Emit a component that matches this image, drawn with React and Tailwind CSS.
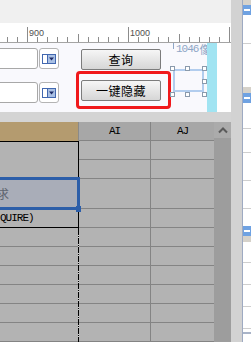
import React from "react";

const cjk = "font-['Noto_Sans_CJK_SC','Noto_Sans',sans-serif]";
const mono = "font-['Liberation_Mono',monospace]";

const Ruler = () => {
  const ticks = [];
  for (let k = -3; k <= 20; k++) {
    const v = 900 + k * 10;
    const x = Math.round(27 + k * 10.1) + 0.5;
    const h = v % 100 === 0 ? 15 : v % 50 === 0 ? 8 : 5;
    ticks.push(
      <line key={k} x1={x} x2={x} y1={19 - h} y2={19} stroke="#8c8c8c" strokeWidth="1" />
    );
  }
  return (
    <div className="h-[20px] bg-white border-b border-[#a4a4a4]">
      <svg width="231" height="19" className="block">
        {ticks}
        <text x="29" y="13" fontSize="9" fill="#505050" fontFamily="Liberation Sans, sans-serif">900</text>
        <text x="130" y="13" fontSize="9" fill="#505050" fontFamily="Liberation Sans, sans-serif">1000</text>
      </svg>
    </div>
  );
};

const DropIcon = () => (
  <svg width="14" height="10" viewBox="0 0 14 10">
    <rect x="0.5" y="0.5" width="13" height="9" fill="#ffffff" stroke="#4268b0" />
    <rect x="5.5" y="0.5" width="8" height="9" fill="#a9c0e4" stroke="#4268b0" />
    <polygon points="7,3.5 12,3.5 9.5,6.5" fill="#1c2a66" />
  </svg>
);

const InputRow = () => (
  <div className="flex items-center">
    <div className="w-[42px] h-[21px] -ml-[4px] bg-white border border-[#a8a8a8] rounded-[3px]" />
    <div className="w-[20px] h-[21px] ml-[1px] bg-white border border-[#b4b4b4] rounded-[3px] flex items-center justify-center">
      <DropIcon />
    </div>
  </div>
);

const Btn = ({ children, className = "" }) => (
  <div
    className={`w-[80px] h-[21px] flex items-center justify-center border border-[#7c7c7c] rounded-[2px] bg-gradient-to-b from-[#f6f6f6] to-[#d6d6d6] text-[12px] tracking-[0.5px] text-black ${cjk} ${className}`}
  >
    {children}
  </div>
);

const Handle = ({ className }) => (
  <div className={`absolute w-[5px] h-[5px] bg-white border border-[#8a9aac] ${className}`} />
);

const FormArea = () => (
  <div className="h-[69px] flex">
    <div className="w-[207px] bg-[#f9f9fd] flex">
      <div className="flex flex-col gap-[13px] pt-[5px]">
        <InputRow />
        <InputRow />
      </div>
      <div className="ml-[17px] flex flex-col pt-[6px]">
        <Btn className="ml-[5px]">查询</Btn>
        <div className="mt-[1px] w-[95px] h-[38px] border-[3px] border-[#f0191c] rounded-[4px] pl-[2px] pt-[6px]">
          <Btn>一键隐藏</Btn>
        </div>
      </div>
      <div className="relative w-[36px]">
        <div className="absolute left-[2px] top-0 w-[1px] h-[6px] bg-[#8ea6c6]" />
        <div className="overflow-hidden w-[36px]">
          <div className="pl-[5px] h-[12px] leading-[12px] whitespace-nowrap text-[#8ea6c6] text-[10px] flex items-center">
            <span className={`${mono} text-[11px] tracking-[-1px]`}>1046</span>
            <span className={`${cjk} text-[11px] ml-[1px]`}>像</span>
          </div>
        </div>
        <div className="absolute left-[2px] top-[26px] w-[31px] h-[23px] border-2 border-[#b2cdee]" />
        <Handle className="-left-[1px] top-[23px]" />
        <Handle className="left-[14px] top-[23px]" />
        <Handle className="left-[31px] top-[23px]" />
        <Handle className="left-[31px] top-[36px]" />
        <Handle className="-left-[1px] top-[49px]" />
        <Handle className="left-[14px] top-[49px]" />
        <Handle className="left-[31px] top-[49px]" />
      </div>
    </div>
    <div className="w-[10px] bg-[#a1e4f2]" />
    <div className="w-[14px] bg-white" />
  </div>
);

const bodyH = ["h-[19px]", "h-[19px]", "h-[30px]", "h-[19px]", "h-[19px]", "h-[19px]", "h-[19px]", "h-[19px]", "h-[19px]", "h-[19px]"];

const GridCol = ({ label, width, last }) => (
  <div className={`${width} flex flex-col ${last ? "" : "border-r border-[#848484]"}`}>
    <div className={`h-[20px] bg-[#a7a7a7] border-b border-[#848484] flex items-center justify-center ${mono} text-[11px] tracking-[-1px] text-black`}>
      {label}
    </div>
    {bodyH.map((h, i) => (
      <div key={i} className={`${h} shrink-0 bg-[#b3b3b3] border-b border-[#848484]`} />
    ))}
  </div>
);

const Sheet = () => (
  <div className="flex h-[220px] overflow-hidden">
    <div className="w-[78px] flex flex-col">
      <div className="h-[20px] bg-[#b49b6f] border-b border-black" />
      <div className="h-[38px] bg-[#b3b3b3]" />
      <div className="h-[30px] relative bg-[#a9adb8] flex items-center overflow-visible">
        <span className={`${cjk} text-[12px] text-[#5f6570] -ml-[3px]`}>求</span>
        <div className="absolute -top-[2px] -bottom-[1px] -left-[3px] -right-[2px] border-[3px] border-[#2c5ea9]" />
        <div className="absolute -right-[3px] -bottom-[3px] w-[5px] h-[6px] bg-[#2c5ea9]" />
      </div>
      <div className="h-[19px] bg-[#b3b3b3] border-b border-black flex items-center overflow-hidden">
        <span className={`${mono} text-[11px] tracking-[-1px] text-black whitespace-nowrap`}>QUIRE)</span>
      </div>
      {bodyH.slice(4).map((h, i) => (
        <div key={i} className={`${h} shrink-0 bg-[#b3b3b3] border-b border-[#848484]`} />
      ))}
    </div>
    <div className="w-[1px] flex flex-col">
      <div className="h-[19px] bg-[#8a8a8a]" />
      <div className="h-[88px] bg-black" />
      <div className="flex-1 bg-[repeating-linear-gradient(to_bottom,#000_0px,#000_6px,transparent_6px,transparent_7px,#000_7px,#000_8px,transparent_8px,transparent_9px)]" />
    </div>
    <GridCol label="AI" width="w-[72px]" />
    <GridCol label="AJ" width="w-[63px]" last />
    <div className="w-[17px] flex flex-col">
      <div className="h-[16px] bg-[#ababab] flex items-center justify-center">
        <svg width="10" height="7" viewBox="0 0 10 7">
          <polyline points="1,5.5 5,1.5 9,5.5" fill="none" stroke="#5a5a5a" strokeWidth="2" />
        </svg>
      </div>
      <div className="flex-1 bg-[#9d9d9d]" />
    </div>
  </div>
);

const SideBox = () => (
  <div className="h-[10px] bg-[#6fa2e2] flex items-center pl-[1px]">
    <div className="w-[6px] h-[2px] bg-white" />
  </div>
);

const RightPanel = () => (
  <div className="w-[9px] border-l border-[#9eaac2] bg-white flex flex-col">
    <div className="h-[5px] bg-[#d6d2ca]" />
    <SideBox />
    <div className="h-[28px]" />
    <div className="h-[1px] bg-[#cfcfcf]" />
    <div className="h-[43px]" />
    <div className="h-[6px] bg-[#d6d2ca]" />
    <SideBox />
    <div className="h-[25px]" />
    <div className="h-[1px] bg-[#cfcfcf]" />
    <div className="h-[23px]" />
    <div className="h-[1px] bg-[#cfcfcf]" />
    <div className="h-[27px]" />
    <div className="h-[1px] bg-[#cfcfcf]" />
    <div className="h-[27px]" />
    <div className="h-[1px] bg-[#cfcfcf]" />
    <div className="h-[17px]" />
    <SideBox />
    <div className="h-[6px] bg-[#d6d2ca]" />
    <div className="h-[20px]" />
    <div className="h-[1px] bg-[#cfcfcf]" />
    <div className="h-[21px]" />
    <div className="h-[1px] bg-[#cfcfcf]" />
    <div className="h-[21px]" />
    <div className="h-[1px] bg-[#cfcfcf]" />
    <div className="h-[21px]" />
    <div className="h-[1px] bg-[#cfcfcf]" />
    <div className="h-[3px]" />
    <div className="h-[2px] bg-[#a9b4c8]" />
  </div>
);

export default function App() {
  return (
    <div className="w-[251px] h-[342px] overflow-hidden flex bg-[#d4d4d4]">
      <div className="w-[231px] flex flex-col">
        <div className="h-[23px] bg-[#f0f0f0]" />
        <Ruler />
        <FormArea />
        <div className="h-[10px] bg-[#d4d4d4]" />
        <Sheet />
      </div>
      <div className="w-[11px] bg-[#d2d2d2]" />
      <RightPanel />
    </div>
  );
}
